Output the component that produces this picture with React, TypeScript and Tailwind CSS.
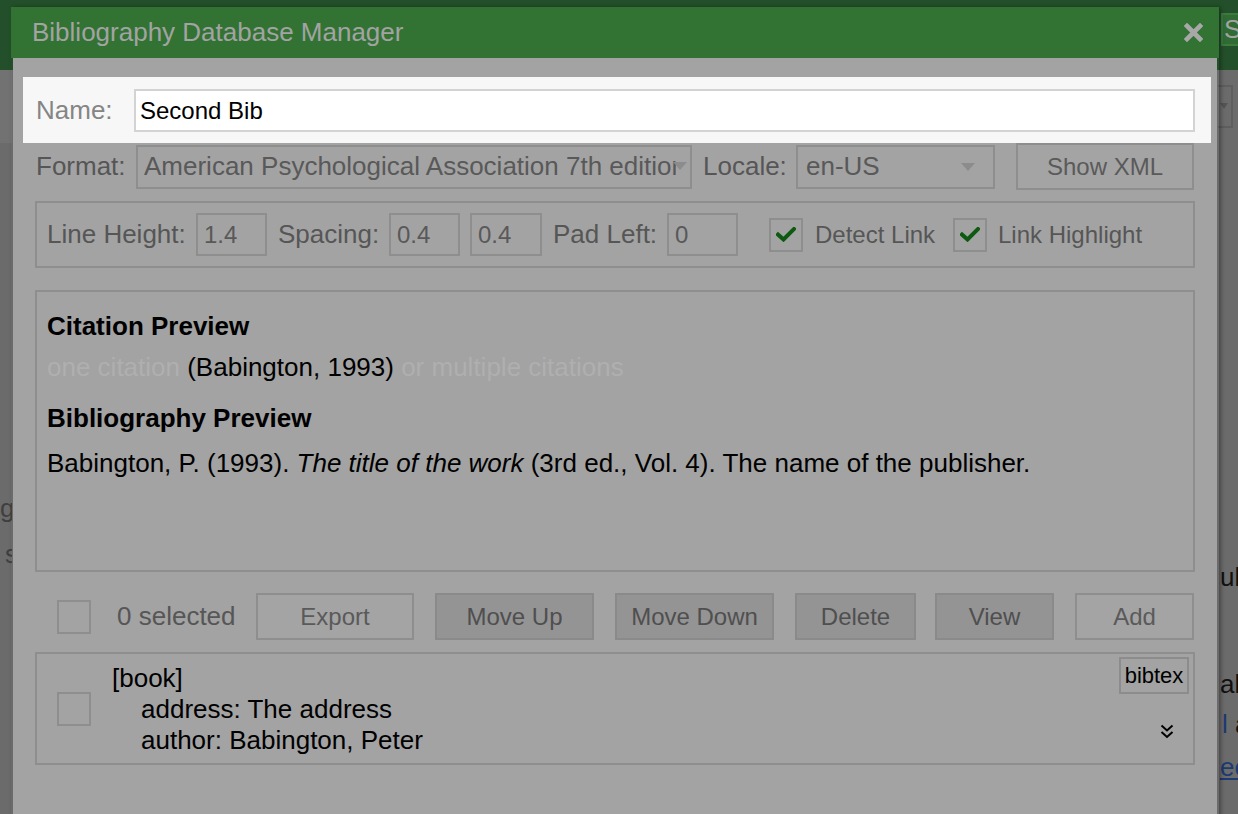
import React from "react";

const FONT = "font-['Liberation_Sans',Arial,Helvetica,sans-serif]";

function Arrow({ className = "" }: { className?: string }) {
  return (
    <svg width="14" height="8" viewBox="0 0 14 8" className={className}>
      <polygon points="0,0 14,0 7,8" fill="#8c8c8c" />
    </svg>
  );
}

function Check() {
  return (
    <svg width="20" height="15" viewBox="0 0 20 15">
      <polyline
        points="2,7.5 7.5,12.5 18,2"
        fill="none"
        stroke="#0f5a12"
        strokeWidth="4"
        strokeLinecap="square"
      />
    </svg>
  );
}

function Box({ checked = false }: { checked?: boolean }) {
  return (
    <div className="flex h-[34px] w-[34px] shrink-0 items-center justify-center border-2 border-[#8e8e8e]">
      {checked && <Check />}
    </div>
  );
}

function Field({ value, w }: { value: string; w: string }) {
  return (
    <div
      className={`${w} flex h-[43px] shrink-0 items-center border-2 border-[#8e8e8e] pl-[6px] text-[24px] text-[#595959]`}
    >
      {value}
    </div>
  );
}

function Button({
  label,
  w,
  disabled = false,
}: {
  label: string;
  w: string;
  disabled?: boolean;
}) {
  return (
    <div
      className={`${w} flex h-[47px] shrink-0 items-center justify-center border-2 text-[24px] ${
        disabled
          ? "border-[#8a8a8a] bg-[#949494] text-[#4f4f4f]"
          : "border-[#8e8e8e] bg-[#a4a4a4] text-[#5a5a5a]"
      }`}
    >
      {label}
    </div>
  );
}

function Background() {
  return (
    <>
      <div className="flex h-[70px] items-start justify-end bg-[#23502a] pt-[13px]">
        <div className="h-[33px] w-[17px] overflow-hidden border-y-2 border-l-2 border-[#3c7a40] bg-[#2f6b33] pl-[1px] text-[26px] leading-[29px] text-[#a3a3a3]">
          S
        </div>
      </div>
      <div className="flex text-[26px] leading-[31px]">
        <div className="w-[12px] shrink-0 overflow-hidden whitespace-nowrap text-[#3f3f3f]">
          <div className="h-[73px] bg-[#727272]" />
          <div className="mt-[350px]">g</div>
          <div className="mt-[15px] pl-[5px]">s</div>
        </div>
        <div className="flex-1" />
        <div className="w-[20px] shrink-0 overflow-hidden whitespace-nowrap text-[#111]">
          <div className="relative mt-[15px] h-[43px] w-[15px] border-y-2 border-r-2 border-[#5e5e5e]">
            <svg width="8" height="6" viewBox="0 0 8 6" className="absolute left-[2px] top-[16px]">
              <polygon points="0,0 8,0 4,6" fill="#555" />
            </svg>
          </div>
          <div className="mt-[434px] pl-[2px]">ublisher</div>
          <div className="mt-[76px] pl-[2px]">about</div>
          <div className="mt-[9px] pl-[4px]">
            <span className="text-[#1d3a72]">l</span> and
          </div>
          <div className="mt-[12px] pl-[2px] text-[#1d3a72] underline">eee</div>
        </div>
      </div>
    </>
  );
}

function Modal() {
  return (
    <div className="absolute left-[11px] top-[7px] w-[1208px] shadow-[2px_0_4px_rgba(0,0,0,0.35)]">
      <div className="flex h-[51px] items-center justify-between bg-[#327334] pl-[21px] pr-[16px]">
        <span className="text-[26px] text-[#a3a3a3]">Bibliography Database Manager</span>
        <svg width="19" height="19" viewBox="0 0 19 19">
          <path d="M3 3 L16 16 M16 3 L3 16" stroke="#a8a8a8" strokeWidth="4.6" strokeLinecap="square" />
        </svg>
      </div>

      <div className="mx-[2px] h-[760px] bg-[#a3a3a3] px-[22px] pt-[19px]">
        {/* highlighted name row */}
        <div className="-ml-[12px] -mr-[16px] flex items-center bg-[#f7f7f7] pb-[11px] pl-[12px] pr-[16px] pt-[12px]">
          <span className="w-[99px] shrink-0 pl-[1px] text-[26px] text-[#858585]">Name:</span>
          <div className="flex h-[43px] flex-1 items-center border-2 border-[#d3d3d3] bg-white pl-[4px] text-[24px] text-black">
            Second Bib
          </div>
        </div>

        {/* format row */}
        <div className="flex h-[47px] items-center text-[26px] text-[#565656]">
          <span className="w-[101px] shrink-0 pl-[1px]">Format:</span>
          <div className="relative flex h-[44px] w-[556px] shrink-0 items-center overflow-hidden whitespace-nowrap border-2 border-[#8e8e8e] pl-[6px] text-[#595959]">
            <span className="w-[532px] overflow-hidden">American Psychological Association 7th edition</span>
            <Arrow className="absolute right-[3px] top-[15px]" />
          </div>
          <span className="ml-[11px] w-[93px] shrink-0">Locale:</span>
          <div className="relative flex h-[44px] w-[199px] shrink-0 items-center border-2 border-[#8e8e8e] pl-[8px] text-[#595959]">
            en-US
            <Arrow className="absolute right-[18px] top-[16px]" />
          </div>
          <div className="ml-[21px]">
            <Button label="Show XML" w="w-[178px]" />
          </div>
        </div>

        {/* options */}
        <div className="mt-[11px] flex h-[67px] items-center whitespace-nowrap border-2 border-[#8e8e8e] pl-[10px] text-[26px] text-[#565656]">
          <span className="w-[149px] shrink-0">Line Height:</span>
          <Field value="1.4" w="w-[71px]" />
          <span className="ml-[11px] w-[111px] shrink-0">Spacing:</span>
          <Field value="0.4" w="w-[71px]" />
          <div className="ml-[10px]">
            <Field value="0.4" w="w-[72px]" />
          </div>
          <span className="ml-[11px] w-[114px] shrink-0">Pad Left:</span>
          <Field value="0" w="w-[71px]" />
          <div className="ml-[31px]">
            <Box checked />
          </div>
          <span className="ml-[12px] w-[138px] shrink-0 text-[24px]">Detect Link</span>
          <Box checked />
          <span className="ml-[11px] text-[24px]">Link Highlight</span>
        </div>

        {/* preview */}
        <div className="mt-[22px] h-[282px] border-2 border-[#8e8e8e] pl-[10px] pt-[19px] text-[26px] leading-[30px] text-black">
          <div className="font-bold">Citation Preview</div>
          <div className="mt-[11px]">
            <span className="text-[#afafaf]">one citation</span> (Babington, 1993){" "}
            <span className="text-[#afafaf]">or multiple citations</span>
          </div>
          <div className="mt-[21px] font-bold">Bibliography Preview</div>
          <div className="mt-[15px]">
            Babington, P. (1993). <i>The title of the work</i> (3rd ed., Vol. 4). The name of the publisher.
          </div>
        </div>

        {/* toolbar */}
        <div className="mt-[21px] flex h-[47px] items-center">
          <div className="flex w-[221px] shrink-0 items-center">
            <div className="ml-[22px]">
              <Box />
            </div>
            <span className="ml-[26px] text-[26px] text-[#565656]">0 selected</span>
          </div>
          <Button label="Export" w="w-[158px]" />
          <div className="ml-[21px]">
            <Button label="Move Up" w="w-[159px]" disabled />
          </div>
          <div className="ml-[21px]">
            <Button label="Move Down" w="w-[159px]" disabled />
          </div>
          <div className="ml-[21px]">
            <Button label="Delete" w="w-[121px]" disabled />
          </div>
          <div className="ml-[19px]">
            <Button label="View" w="w-[119px]" disabled />
          </div>
          <div className="ml-[21px]">
            <Button label="Add" w="w-[119px]" />
          </div>
        </div>

        {/* entry */}
        <div className="relative mt-[12px] flex h-[113px] items-center border-2 border-[#8e8e8e] text-[26px] leading-[31px] text-black">
          <div className="ml-[20px]">
            <Box />
          </div>
          <div className="ml-[21px] pt-[2px]">
            <div>[book]</div>
            <div className="pl-[29px]">address: The address</div>
            <div className="pl-[29px]">author: Babington, Peter</div>
          </div>
          <div className="absolute right-[4px] top-[3px] flex h-[37px] w-[70px] items-center justify-center border-2 border-[#8c8c8c] text-[22px]">
            bibtex
          </div>
          <svg width="16" height="17" viewBox="0 0 16 17" className="absolute right-[18px] top-[69px]">
            <polyline points="2.5,2.5 8,7.5 13.5,2.5" fill="none" stroke="#000" strokeWidth="2" />
            <polyline points="2.5,9 8,14 13.5,9" fill="none" stroke="#000" strokeWidth="2" />
          </svg>
        </div>
      </div>
    </div>
  );
}

export default function App() {
  return (
    <div className={`relative h-[814px] w-[1238px] overflow-hidden bg-[#6b6b6b] ${FONT}`}>
      <Background />
      <Modal />
    </div>
  );
}
